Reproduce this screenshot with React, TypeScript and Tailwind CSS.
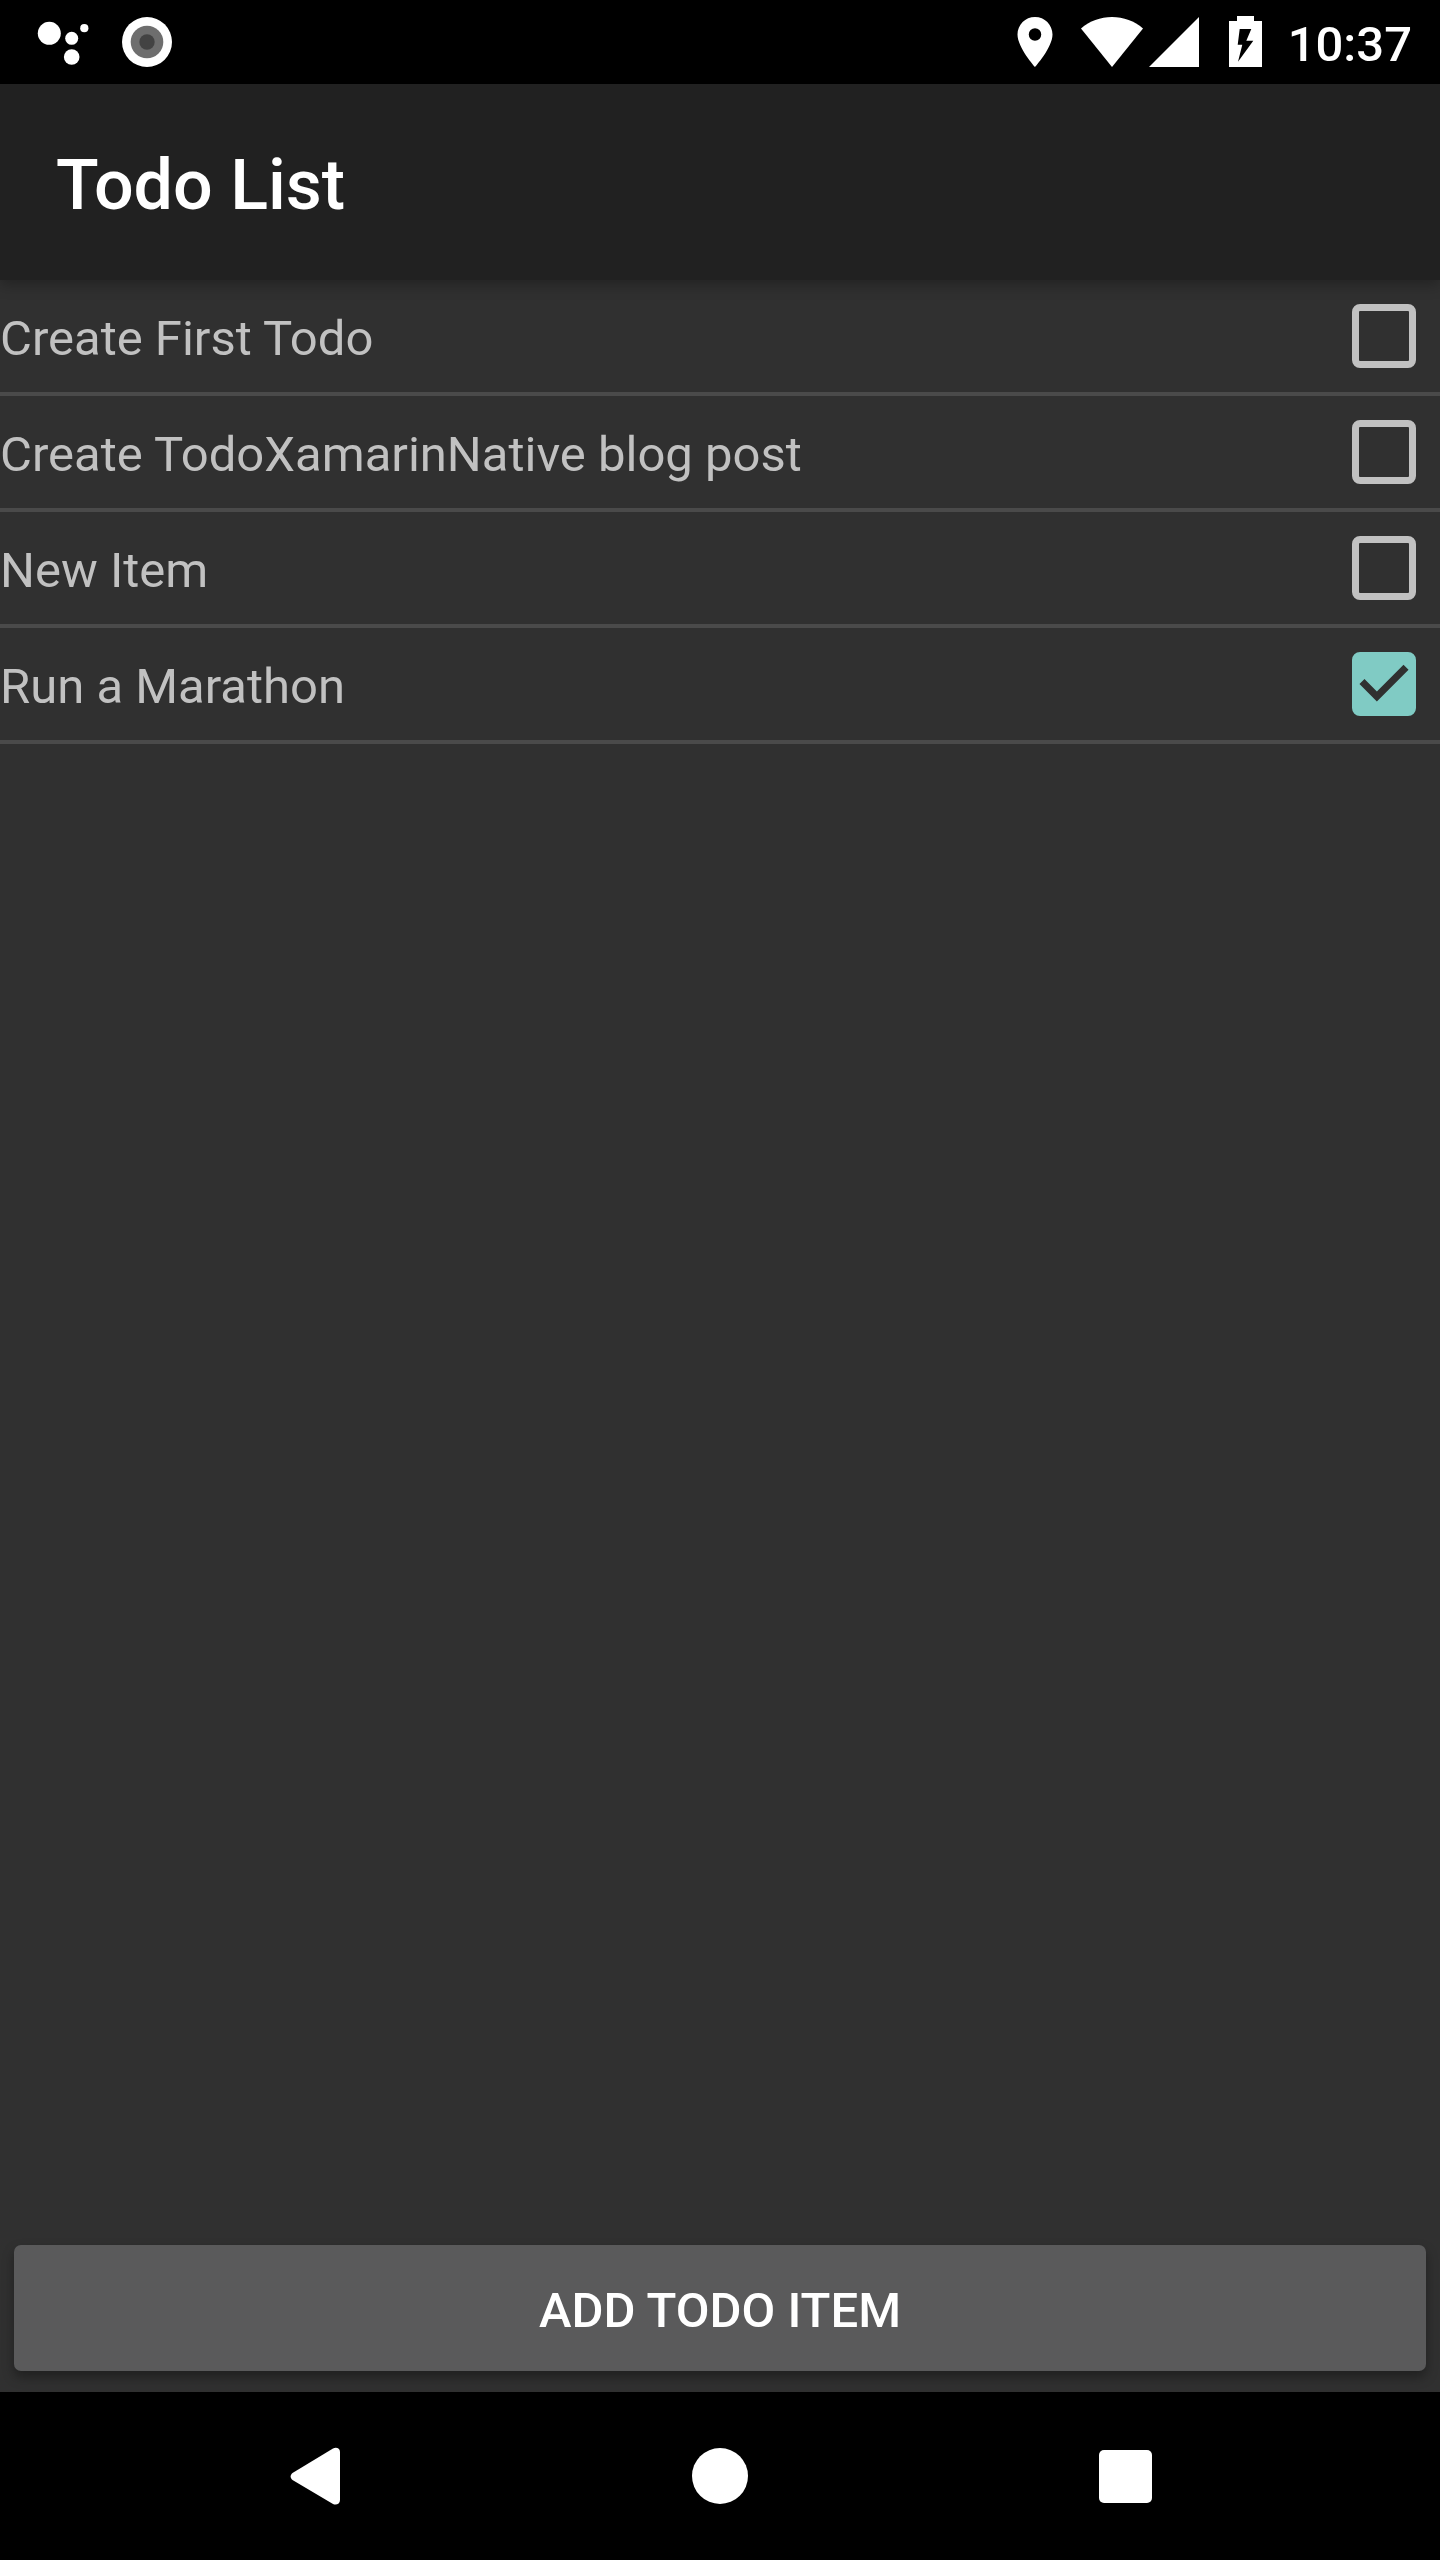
import { useState } from "react";

type Todo = { id: string; title: string; done: boolean };

const initialTodos: Todo[] = [
  { id: "first", title: "Create First Todo", done: false },
  { id: "blog", title: "Create TodoXamarinNative blog post", done: false },
  { id: "new", title: "New Item", done: false },
  { id: "marathon", title: "Run a Marathon", done: true },
];

function StatusBar() {
  return (
    <div className="flex h-[84px] shrink-0 items-center justify-between bg-black pr-7 pl-9 text-white">
      <div className="flex items-center gap-8">
        <svg className="h-[52px] w-[54px]" viewBox="36 16 54 52" fill="currentColor" aria-hidden="true">
          <circle cx="49.3" cy="33.3" r="11.5" />
          <circle cx="71.7" cy="38.3" r="6.5" />
          <circle cx="84.3" cy="28.2" r="4.1" />
          <circle cx="71.7" cy="57" r="7.8" />
        </svg>
        <svg className="size-[50px]" viewBox="0 0 50 50" aria-hidden="true">
          <circle cx="25" cy="25" r="25" fill="#ffffff" />
          <circle cx="25" cy="25" r="16.3" fill="#6e6e6e" />
          <circle cx="25" cy="25" r="7.7" fill="#434343" />
        </svg>
      </div>
      <div className="flex items-center">
        <svg className="h-[50px] w-9" viewBox="4.8 2 14.4 20" fill="currentColor" aria-hidden="true">
          <path d="M12 2C8.13 2 5 5.13 5 9c0 5.25 7 13 7 13s7-7.75 7-13c0-3.87-3.13-7-7-7zm0 9.5a2.5 2.5 0 0 1 0-5 2.5 2.5 0 0 1 0 5z" />
        </svg>
        <svg className="ml-7 h-[50px] w-[62px]" viewBox="0 0 62 50" fill="currentColor" aria-hidden="true">
          <path d="M31 50 0 11.5C8.5 4 19.500 0 31 0s22.500 4 31 11.500z" />
        </svg>
        <svg className="ml-1.5 size-[50px]" viewBox="0 0 50 50" fill="currentColor" aria-hidden="true">
          <path d="M0 50h50V0z" />
        </svg>
        <svg className="ml-[30px] h-[52px] w-[33px]" viewBox="1229 16 33 52" aria-hidden="true">
          <path d="M1237 16h17v5h8v46h-33V21h8z" fill="currentColor" />
          <path d="M1239.700 29h11.600l-5 11.700h7L1238 61.700l4.300-17h-4.600z" fill="#000000" />
        </svg>
        <time className="pt-1.5 pl-[26px] text-[49px] leading-[60px] font-medium">10:37</time>
      </div>
    </div>
  );
}

function TodoRow({ todo, onToggle }: { todo: Todo; onToggle: () => void }) {
  return (
    <li className="flex h-[116px] items-center justify-between border-b-4 border-[#4a4a4a] pr-6">
      <label htmlFor={todo.id} className="grow pt-1.5 text-[49px] leading-[60px] text-[#c1c1c1]">
        {todo.title}
      </label>
      <span className="relative size-16 shrink-0">
        <input
          id={todo.id}
          type="checkbox"
          checked={todo.done}
          onChange={onToggle}
          className="block size-16 appearance-none rounded-lg border-[7px] border-[#c1c1c1] checked:border-[#80cbc4] checked:bg-[#80cbc4]"
        />
        {todo.done && (
          <svg className="pointer-events-none absolute inset-0 size-16" viewBox="3 3 18 18" fill="#303030" aria-hidden="true">
            <path d="M10 16.900l-4.900-4.900 1.410-1.410L10 14.080l7.490-7.490L18.900 8z" />
          </svg>
        )}
      </span>
    </li>
  );
}

function NavigationBar() {
  return (
    <nav className="flex h-[168px] shrink-0 bg-black px-28 text-white">
      <button type="button" aria-label="Back" className="flex flex-1 items-center justify-center">
        <svg className="h-[58px] w-[50px]" viewBox="0 0 50 58" fill="currentColor" aria-hidden="true">
          <path d="M2.500 26 43 1.500C46 0 50 1 50 5v48c0 4-4 5.500-7 4L2.500 33C0 31 0 28 2.500 26z" />
        </svg>
      </button>
      <button type="button" aria-label="Home" className="flex flex-1 items-center justify-center">
        <span className="size-14 rounded-full bg-white" />
      </button>
      <button type="button" aria-label="Recent apps" className="flex flex-1 items-center justify-center">
        <span className="size-[53px] rounded-[5px] bg-white" />
      </button>
    </nav>
  );
}

export default function App() {
  const [todos, setTodos] = useState(initialTodos);

  const toggle = (id: string) =>
    setTodos((items) => items.map((t) => (t.id === id ? { ...t, done: !t.done } : t)));

  return (
    <div className="flex min-h-screen flex-col bg-[#303030] font-['Roboto',sans-serif]">
      <StatusBar />
      <header className="flex h-[196px] shrink-0 items-center bg-[#212121] px-14 pt-1.5 shadow-[0_4px_14px_rgba(0,0,0,0.3)]">
        <h1 className="text-[70px] leading-[82px] font-medium text-white">Todo List</h1>
      </header>
      <main className="flex grow flex-col">
        <ul className="grow">
          {todos.map((todo) => (
            <TodoRow key={todo.id} todo={todo} onToggle={() => toggle(todo.id)} />
          ))}
        </ul>
        <button
          type="button"
          className="mx-3.5 mb-[21px] h-[126px] rounded-[7px] bg-[#5a5a5b] pt-1.5 text-[49px] leading-[60px] font-medium text-white uppercase shadow-[0_6px_12px_rgba(0,0,0,0.35)]"
        >
          Add Todo Item
        </button>
      </main>
      <NavigationBar />
    </div>
  );
}
